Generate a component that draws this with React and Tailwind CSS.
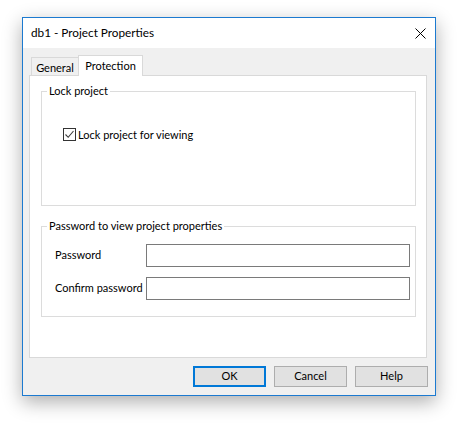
import React from "react";

const font = { fontFamily: 'Lato, "Noto Sans", sans-serif' };

function Checkbox() {
  return (
    <span className="w-[13px] h-[13px] border border-[#333333] bg-white flex items-center justify-center shrink-0">
      <svg width="11" height="11" viewBox="0 0 11 11">
        <path d="M1.5 5.5 L4.2 8.3 L9.5 2" fill="none" stroke="#3c3c3c" strokeWidth="1.1" />
      </svg>
    </span>
  );
}

function Button({ children, focused }) {
  return (
    <button
      className={
        "w-[73px] h-[21px] bg-[#e1e1e1] flex items-center justify-center text-[11px] text-black " +
        (focused ? "border-2 border-[#0078d7]" : "border border-[#adadad]")
      }
    >
      {children}
    </button>
  );
}

export default function App() {
  return (
    <div className="w-[470px] h-[436px] bg-white pl-[22px] pt-[17px]" style={font}>
      <div className="w-[414px] h-[379px] border border-[#1c7ad0] flex flex-col shadow-[0_6px_18px_rgba(0,0,0,0.32)]">
        <div className="h-[30px] bg-white flex items-center justify-between pl-[8px] pr-[9px] text-[11.75px] text-black">
          <span>db1 - Project Properties</span>
          <svg width="11" height="11" viewBox="0 0 11 11">
            <path d="M0.5 0.5 L10.5 10.5 M10.5 0.5 L0.5 10.5" stroke="#000" strokeWidth="1" />
          </svg>
        </div>
        <div className="flex-1 bg-[#f0f0f0] flex flex-col pt-[7px] pl-[6px] text-[11px] text-black">
          <div className="h-[20px] flex items-end pl-[2px] relative z-10">
            <div className="h-[18px] w-[47px] border border-r-0 border-b-0 border-[#d9d9d9] bg-[#f0f0f0] flex items-center justify-center leading-none pt-[1px] whitespace-nowrap">
              General
            </div>
            <div className="h-[21px] w-[65px] -mb-[1px] border border-b-0 border-[#d9d9d9] bg-white flex items-start justify-center leading-none pt-[4px] whitespace-nowrap">
              Protection
            </div>
          </div>
          <div className="w-[398px] h-[283px] border border-[#d9d9d9] bg-white pl-[11px] pt-[7px]">
            <fieldset className="w-[375px] h-[123px] border border-[#dcdcdc]">
              <legend className="ml-[5px] px-[2px] leading-[16px]">Lock project</legend>
              <div className="pl-[21px] pt-[29px] flex items-center gap-[2px]">
                <Checkbox />
                <span className="leading-none whitespace-nowrap">Lock project for viewing</span>
              </div>
            </fieldset>
            <fieldset className="mt-[12px] w-[375px] h-[99px] border border-[#dcdcdc]">
              <legend className="ml-[5px] px-[2px] leading-[16px]">Password to view project properties</legend>
              <div className="pt-[10px] pl-[13px] grid grid-cols-[91px_264px] items-center gap-y-[10px]">
                <span className="whitespace-nowrap">Password</span>
                <div className="h-[23px] border border-[#7a7a7a] bg-white" />
                <span className="whitespace-nowrap">Confirm password</span>
                <div className="h-[23px] border border-[#7a7a7a] bg-white" />
              </div>
            </fieldset>
          </div>
          <div className="flex gap-[8px] mt-[8px] pl-[164px]">
            <Button focused>OK</Button>
            <Button>Cancel</Button>
            <Button>Help</Button>
          </div>
        </div>
      </div>
    </div>
  );
}
